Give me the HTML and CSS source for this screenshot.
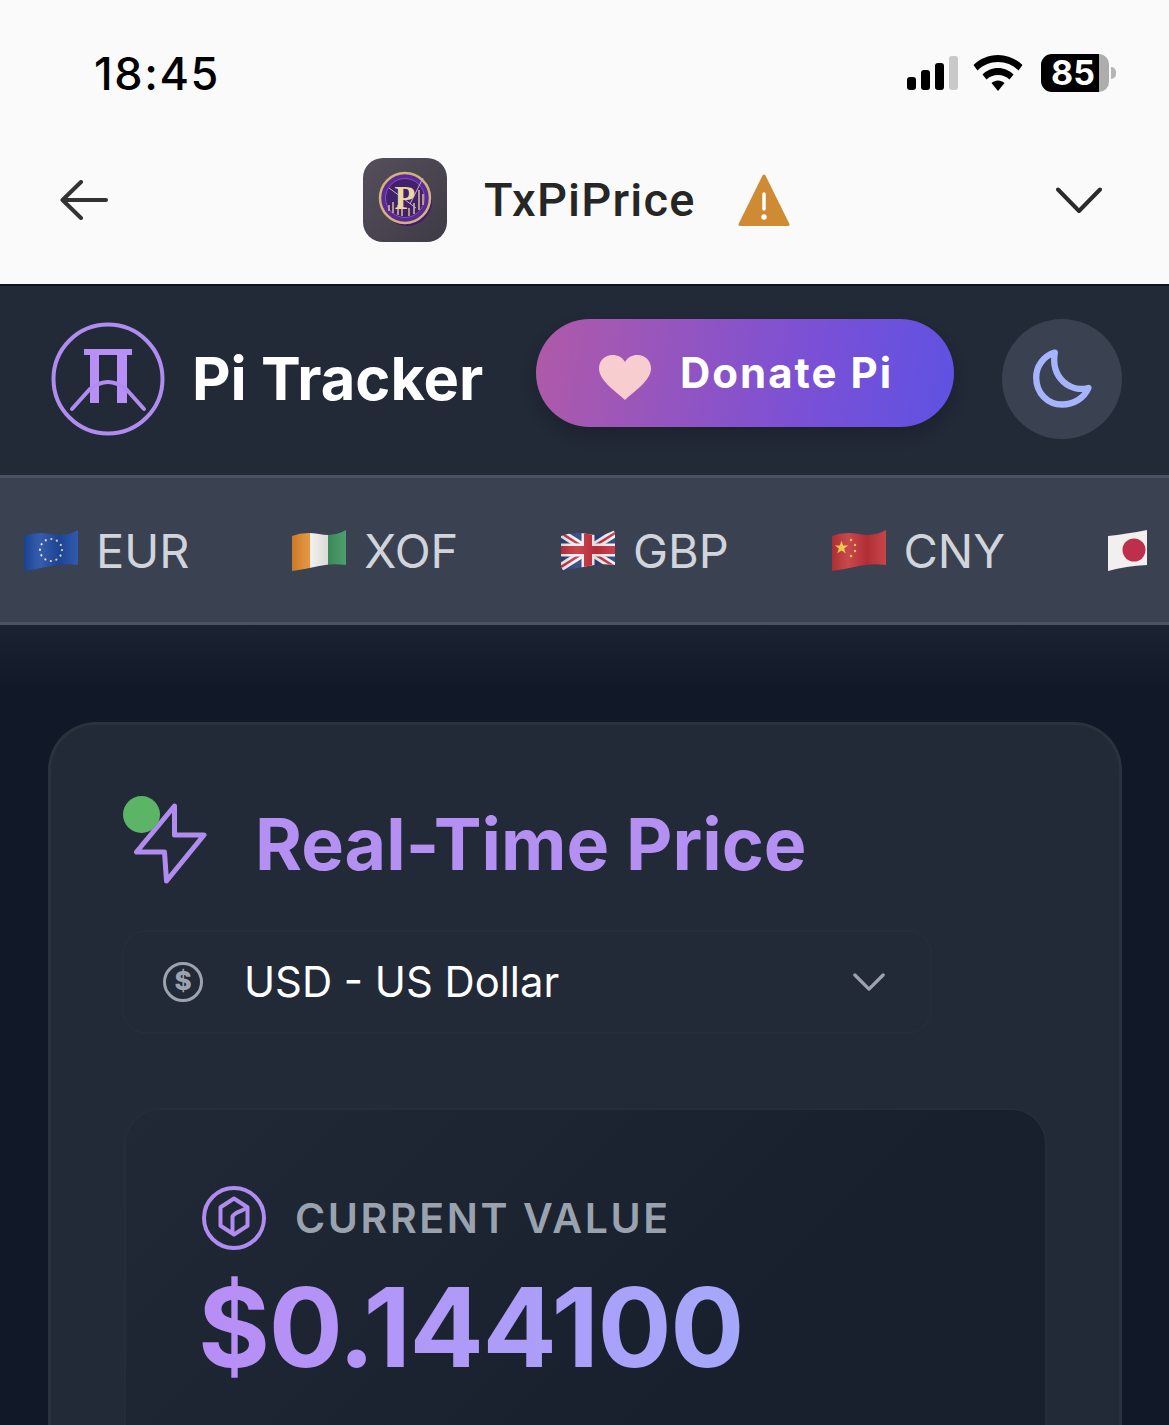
FILE: index.html
```html
<!DOCTYPE html>
<html lang="en">
<head>
<meta charset="utf-8">
<title>TxPiPrice</title>
<link rel="stylesheet" href="styles.css">
</head>
<body>
<svg class="defs" width="0" height="0"><defs>
  <linearGradient id="shade" x1="0" x2="1" y1="0" y2="0"><stop offset="0" stop-color="#000" stop-opacity=".12"/><stop offset=".3" stop-color="#fff" stop-opacity=".1"/><stop offset=".65" stop-color="#000" stop-opacity=".1"/><stop offset="1" stop-color="#fff" stop-opacity=".08"/></linearGradient>
  <linearGradient id="icon-bg" x1="0" x2="1" y1="0" y2="1"><stop offset="0" stop-color="#544f5b"/><stop offset="1" stop-color="#3f3b46"/></linearGradient>
  <clipPath id="wave"><path d="M0 7Q12 2 27 5T54 1V36Q40 34 27 37T0 42Z"/></clipPath>
  <clipPath id="wave-jp"><path d="M0 7Q18 5 39 1V36Q18 37 0 42Z"/></clipPath>
</defs></svg>
<div class="screen">
  <header class="chrome">
    <div class="status">
      <span class="time">18:45</span>
      <div class="status-icons">
        <div class="signal"><i class="bar b1"></i><i class="bar b2"></i><i class="bar b3"></i><i class="bar b4"></i></div>
        <svg class="wifi" viewBox="0 0 50 36"><path d="M25 0C15.500 0 7 3.800 0.500 10L4.500 15.500C10 10 17 7 25 7S40 10 45.500 15.500L49.500 10C43 3.800 34.500 0 25 0Z"/><path d="M25 13C19 13 13.500 15.500 9.500 19.500L13.500 24.500C16.500 21.700 20.500 20 25 20S33.500 21.700 36.500 24.500L40.500 19.500C36.500 15.500 31 13 25 13Z"/><path d="M25 25.500C22.500 25.500 20.300 26.500 18.500 28L25 36L31.500 28C29.700 26.500 27.500 25.500 25 25.500Z"/></svg>
        <div class="battery"><span class="battery-fill">85</span><i class="battery-rest"></i></div>
        <i class="battery-nub"></i>
      </div>
    </div>
    <nav class="appbar">
      <svg class="back" viewBox="0 0 48 40"><path d="M46 20H3M21 2L2.500 20L21 38"/></svg>
      <svg class="app-icon" viewBox="0 0 84 84">
        <rect width="84" height="84" rx="20" fill="url(#icon-bg)"/>
        <circle cx="44" cy="43" r="25" fill="#3f1a72"/>
        <circle cx="42" cy="40" r="25" fill="#5a2a94" stroke="#d3b27c" stroke-width="2.500"/>
        <circle cx="42" cy="40" r="19.500" fill="#41206c" stroke="#8450c2" stroke-width="1"/>
        <path d="M26 53V47M30 55V44M35 57V47M39 58V50M46 58V50M51 56V45M56 52V32M60 47V36" stroke="#d8bf8d" stroke-width="1.500"/>
        <path d="M26 30L53 50M60 20L47 46" stroke="#c3b0d2" stroke-width="1" fill="none"/>
        <text class="app-p" x="42" y="51" text-anchor="middle">P</text>
      </svg>
      <span class="app-name">TxPiPrice</span>
      <svg class="warn" viewBox="0 0 52 54"><path d="M26 3L50 51.500H2Z" fill="#cf8b33" stroke="#cf8b33" stroke-width="3" stroke-linejoin="round"/><path d="M26 21V36" stroke="#fff" stroke-width="3.500" stroke-linecap="round"/><circle cx="26" cy="44" r="2.700" fill="#fff"/></svg>
      <svg class="menu-chevron" viewBox="0 0 46 27"><path d="M2 2.500L23 24L44 2.500"/></svg>
    </nav>
  </header>

  <section class="topbar">
    <svg class="logo" viewBox="0 0 114 114">
      <circle cx="57" cy="57" r="54.500" fill="none" stroke="#b18cf0" stroke-width="4"/>
      <path d="M33 27H81V33H76V81H66V33H48V81H39V33H33Z" fill="#b88ff5"/>
      <path d="M21 87L39 67Q57 53 75 67L93 87" fill="none" stroke="#b18cf0" stroke-width="4" stroke-linecap="round"/>
    </svg>
    <h1 class="brand">Pi Tracker</h1>
    <button class="donate">
      <svg class="heart" viewBox="0 0 52 46"><path d="M26 45C18 37 0 26 0 13.500C0 5.500 6 0 13.500 0C19 0 23.500 2.500 26 7C28.500 2.500 33 0 38.500 0C46 0 52 5.500 52 13.500C52 26 34 37 26 45Z"/></svg>
      <span class="donate-label">Donate Pi</span>
    </button>
    <button class="theme">
      <svg viewBox="0 0 24 24"><path d="M9.600 3.200C5.500 4.500 3.400 8 3.400 11.500C3.400 16.800 7.300 20.500 12 20.500C16 20.500 19.400 18.300 20.800 15C15 16.500 8.200 12 9.600 3.200Z"/></svg>
    </button>
  </section>

  <section class="ticker">
    <div class="tick">
      <svg class="flag" viewBox="0 0 54 42"><g clip-path="url(#wave)"><rect width="54" height="42" fill="#1f4ba5"/><circle cx="27" cy="21" r="11" fill="none" stroke="#e8e2a8" stroke-width="2.200" stroke-linecap="round" stroke-dasharray="0.100 5.660"/><rect width="54" height="42" fill="url(#shade)"/></g></svg>
      <span>EUR</span>
    </div>
    <div class="tick">
      <svg class="flag" viewBox="0 0 54 42"><g clip-path="url(#wave)"><rect width="18" height="42" fill="#e38a2c"/><rect x="18" width="18" height="42" fill="#f5f3ef"/><rect x="36" width="18" height="42" fill="#3f9560"/><rect width="54" height="42" fill="url(#shade)"/></g></svg>
      <span>XOF</span>
    </div>
    <div class="tick">
      <svg class="flag" viewBox="0 0 54 42"><g clip-path="url(#wave)"><rect width="54" height="42" fill="#2b3f7e"/><path d="M0 4L54 38M54 4L0 38" stroke="#f4f4f4" stroke-width="8"/><path d="M0 4L54 38M54 4L0 38" stroke="#c8303f" stroke-width="2.500"/><path d="M27 0V42M0 21H54" stroke="#f4f4f4" stroke-width="13"/><path d="M27 0V42M0 21H54" stroke="#c8303f" stroke-width="8"/><rect width="54" height="42" fill="url(#shade)"/></g></svg>
      <span>GBP</span>
    </div>
    <div class="tick">
      <svg class="flag" viewBox="0 0 54 42"><g clip-path="url(#wave)"><rect width="54" height="42" fill="#c2343a"/><path d="M10 11L12.400 18H19.500L13.800 22.300L16 29L10 25L4 29L6.200 22.300L0.500 18H7.600Z" transform="translate(2.500 4) scale(.7)" fill="#f6cf46"/><circle cx="19" cy="11" r="1.200" fill="#f6cf46"/><circle cx="23" cy="16" r="1.200" fill="#f6cf46"/><circle cx="23" cy="22" r="1.200" fill="#f6cf46"/><circle cx="19" cy="27" r="1.200" fill="#f6cf46"/><rect width="54" height="42" fill="url(#shade)"/></g></svg>
      <span>CNY</span>
    </div>
    <div class="tick">
      <svg class="flag flag-jp" viewBox="0 0 39 42"><g clip-path="url(#wave-jp)"><rect width="39" height="42" fill="#f2f0ee"/><circle cx="26" cy="21" r="11.500" fill="#be2f4b"/></g></svg>
    </div>
  </section>

  <main class="content">
    <article class="card">
      <div class="card-head">
        <svg class="bolt" viewBox="0 0 73 81"><polygon points="40.500,3 2.500,49 30.500,49 32.500,78 70,32 40.500,32" /></svg>
        <i class="live-dot"></i>
        <h2 class="card-title">Real-Time Price</h2>
      </div>
      <div class="select">
        <span class="dollar">$</span>
        <span class="select-text">USD - US Dollar</span>
        <svg class="select-chevron" viewBox="0 0 34 20"><path d="M2 2L17 17L32 2"/></svg>
      </div>
      <div class="value-panel">
        <div class="value-label">
          <svg class="pi-coin" viewBox="0 0 64 64"><circle cx="32" cy="32" r="30" /><path d="M32 12.500L45.500 21.300V39.700L32 48.500L18.500 39.700V21.300ZM30.500 48V31C30.500 27 41 25 45.500 21.300"/></svg>
          <span>CURRENT VALUE</span>
        </div>
        <div class="price">$0.144100</div>
      </div>
    </article>
  </main>
</div>
</body>
</html>
```
FILE: styles.css
```css
* { box-sizing: border-box; }
html, body { margin: 0; padding: 0; }
body { background: #111827; font-family: "Inter", "Liberation Sans", sans-serif; }
.defs { display: block; height: 0; }
.screen { width: 1169px; height: 1425px; overflow: hidden; display: flex; flex-direction: column; }

.chrome { height: 286px; flex: none; background: #fafafa; border-bottom: 2px solid #0e1420; }
.status { height: 146px; display: flex; align-items: center; justify-content: space-between; padding: 0 53px 0 94px; }
.time { font-size: 45px; font-weight: 500; color: #000; letter-spacing: 1.600px; }
.status-icons { display: flex; align-items: center; }
.signal { display: flex; align-items: flex-end; gap: 5px; height: 34px; margin-right: 15px; }
.bar { width: 9px; background: #000; border-radius: 3px; display: block; }
.b1 { height: 13px; } .b2 { height: 20px; } .b3 { height: 27px; } .b4 { height: 34px; background: #c9c9c9; }
.wifi { width: 50px; height: 36px; margin-right: 18px; }
.battery { width: 68px; height: 38px; display: flex; }
.battery-fill { width: 58px; background: #000; border-radius: 11px 0 0 11px; color: #fff; font-size: 34px; font-weight: 700; line-height: 38px; text-align: center; padding-left: 6px; }
.battery-rest { flex: 1; background: #adadad; border-radius: 0 11px 11px 0; }
.battery-nub { width: 5px; height: 12px; background: #b5b5b5; border-radius: 0 5px 5px 0; margin-left: 2px; }

.appbar { height: 108px; display: flex; align-items: center; padding: 0 67px 0 60px; }
.back { width: 48px; height: 40px; fill: none; stroke: #333; stroke-width: 4; stroke-linecap: round; stroke-linejoin: round; }
.app-icon { width: 84px; height: 84px; margin-left: 255px; flex: none; }
.app-p { font-family: "Liberation Serif", serif; font-size: 34px; font-weight: 700; fill: #ead9a0; }
.app-name { font-family: "Roboto", sans-serif; font-size: 47px; font-weight: 500; letter-spacing: 1.200px; color: #262626; margin-left: 37px; margin-top: -2px; }
.warn { width: 52px; height: 54px; margin-left: 42px; }
.menu-chevron { width: 46px; height: 27px; margin-left: auto; fill: none; stroke: #2b2b2b; stroke-width: 4; stroke-linecap: round; stroke-linejoin: round; }

.topbar { height: 189px; flex: none; background: #222937; display: flex; align-items: flex-start; padding: 33px 47px 0 51px; }
.logo { width: 114px; height: 114px; margin-top: 3px; flex: none; }
.brand { width: 291px; margin: 2px 0 0 27px; font-size: 59.600px; font-weight: 700; color: #fff; line-height: 114px; white-space: nowrap; }
.donate { width: 418px; height: 108px; margin-left: 53px; flex: none; border: 0; border-radius: 54px; background: linear-gradient(100deg, #b05aa8 0%, #7a50d6 65%, #5e52e2 100%); box-shadow: 0 8px 16px rgba(0, 0, 0, .18); display: flex; align-items: center; padding: 0 0 0 63px; color: #fff; font-family: inherit; font-size: 42px; font-weight: 700; letter-spacing: 2px; }
.donate-label { margin-top: -1px; }
.heart { width: 52px; height: 46px; fill: #f8cdd0; margin-right: 29px; margin-top: 9px; flex: none; }
.theme { width: 120px; height: 120px; margin-left: 48px; flex: none; border: 0; border-radius: 50%; background: #3a4150; padding: 24px; }
.theme svg { width: 72px; height: 72px; display: block; fill: none; stroke: #a5b4fc; stroke-width: 2.100; stroke-linecap: round; stroke-linejoin: round; }

.ticker { height: 150px; flex: none; background: #3a4150; border-top: 3px solid #4b5262; border-bottom: 3px solid #4b5262; display: flex; align-items: center; gap: 102.700px; padding-left: 24px; overflow: hidden; }
.tick { display: flex; align-items: center; gap: 18px; flex: none; font-size: 47px; font-weight: 400; color: #d1d5db; }
.flag { width: 54px; height: 42px; flex: none; display: block; }
.flag-jp { width: 39px; }

.content { flex: 1; padding: 97px 47px 0 48px; background: linear-gradient(180deg, #1b2231 0, #111827 65px); }
.card { height: 800px; background: #222937; border: 3px solid #2a313f; border-bottom: 0; border-radius: 48px 48px 0 0; padding: 0 71px 0 71px; }
.card-head { position: relative; display: flex; align-items: center; height: 205px; padding-top: 54px; padding-bottom: 22px; }
.bolt { width: 73px; height: 81px; margin-left: 12px; flex: none; fill: none; stroke: #b18cf0; stroke-width: 5; stroke-linejoin: round; }
.live-dot { position: absolute; left: 1px; top: 71px; width: 37px; height: 37px; border-radius: 50%; background: #5cb567; }
.card-title { margin: 0 0 0 48px; font-size: 71.700px; font-weight: 700; color: #b490f3; white-space: nowrap; }
.select { width: 810px; height: 104px; display: flex; align-items: center; border: 2px solid #252c3a; border-radius: 24px; padding: 0 45px 0 39px; font-size: 41.800px; color: #fff; }
.dollar { width: 40px; height: 40px; flex: none; border: 3.500px solid #9ca3af; border-radius: 50%; color: #9ca3af; font-size: 26px; font-weight: 800; line-height: 32px; text-align: center; }
.select-text { margin-left: 41px; flex: 1; }
.select-chevron { width: 32px; height: 19px; margin-top: 1px; fill: none; stroke: #9ca3af; stroke-width: 3.500; stroke-linecap: round; stroke-linejoin: round; }
.value-panel { width: 923px; height: 500px; margin-top: 74px; margin-left: 2px; border: 2px solid #252c3a; border-radius: 36px; background: linear-gradient(135deg, #212836 0%, #181f2d 60%); padding: 76px 76px 0 76px; }
.value-label { display: flex; align-items: center; gap: 29px; font-size: 41px; font-weight: 600; letter-spacing: 2.600px; color: #9aa2ae; }
.pi-coin { width: 64px; height: 64px; flex: none; fill: none; stroke: #b18cf0; stroke-width: 4; stroke-linejoin: round; }
.price { display: block; width: fit-content; margin: 12px 0 0 -4px; font-size: 110px; font-weight: 700; line-height: 130px; letter-spacing: -1.400px; background: linear-gradient(90deg, #b88df5 0%, #a5a8fb 100%); -webkit-background-clip: text; background-clip: text; color: transparent; }
```
